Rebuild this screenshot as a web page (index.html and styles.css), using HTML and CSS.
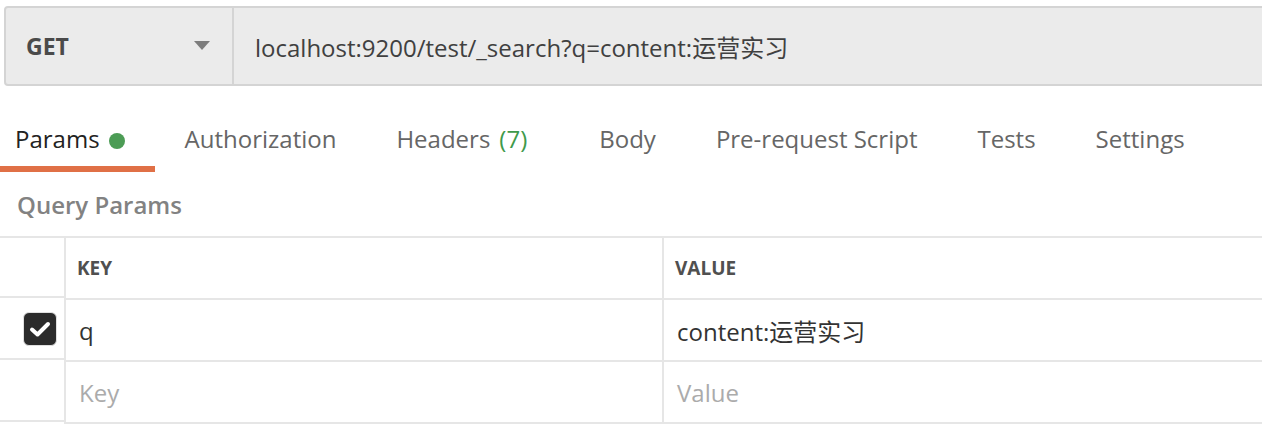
FILE: index.html
```html
<!DOCTYPE html>
<html>
<head>
<meta charset="utf-8">
<link rel="stylesheet" href="styles.css">
</head>
<body>
<div class="page">
  <div class="urlbar">
    <div class="method">
      <span class="method-name">GET</span>
      <svg class="caret" width="16" height="9" viewBox="0 0 16 9"><path d="M0 0H16L8 9Z" fill="#7d7d7d"/></svg>
    </div>
    <div class="url">localhost:9200/test/_search?q=content:运营实习</div>
  </div>

  <div class="tabs">
    <div class="tab active">Params <span class="dot"></span></div>
    <div class="tab">Authorization</div>
    <div class="tab tab-headers">Headers <span class="count">(7)</span></div>
    <div class="tab">Body</div>
    <div class="tab tab-wide">Pre-request Script</div>
    <div class="tab">Tests</div>
    <div class="tab">Settings</div>
  </div>

  <div class="section-title">Query Params</div>

  <div class="grid">
    <div class="cell c1 head"></div>
    <div class="cell c2 head"><span class="th">KEY</span></div>
    <div class="cell c3 head"><span class="th">VALUE</span></div>

    <div class="cell c1 chk-cell">
      <span class="checkbox">
        <svg width="22" height="18" viewBox="0 0 22 18"><path d="M3 9.5L8.5 14.5L19 4" fill="none" stroke="#fff" stroke-width="4" stroke-linecap="round" stroke-linejoin="round"/></svg>
      </span>
    </div>
    <div class="cell c2"><span class="val">q</span></div>
    <div class="cell c3"><span class="val">content:运营实习</span></div>

    <div class="cell c1"></div>
    <div class="cell c2"><span class="ph">Key</span></div>
    <div class="cell c3"><span class="ph">Value</span></div>
  </div>
</div>
</body>
</html>
```

FILE: styles.css
```css
html, body {
  margin: 0;
  padding: 0;
  background: #fff;
  overflow: hidden;
}
body {
  font-family: "Open Sans", "Noto Sans CJK SC", sans-serif;
  color: #333;
}
.page {
  width: 1262px;
  height: 434px;
  overflow: hidden;
}

/* URL bar */
.urlbar {
  margin: 6px 0 0 4px;
  width: 1280px;
  height: 76px;
  border: 2px solid #d4d4d4;
  border-radius: 4px;
  background: #ebebeb;
  display: flex;
  box-sizing: content-box;
}
.method {
  width: 228px;
  padding-left: 20px;
  padding-right: 22px;
  box-sizing: border-box;
  display: flex;
  align-items: center;
  justify-content: space-between;
  border-right: 2px solid #d4d4d4;
}
.method-name {
  font-weight: 700;
  font-size: 23px;
  color: #4a4a4a;
}
.caret { display: block; margin-top: -2px; }
.url {
  padding-left: 21px;
  display: flex;
  align-items: center;
  font-size: 24px;
  color: #404040;
  white-space: nowrap;
}

/* Tabs */
.tabs {
  display: flex;
  margin-top: 22px;
  height: 64px;
}
.tab {
  font-size: 24px;
  color: #666;
  padding: 14px 30px 0;
  line-height: 33px;
  box-sizing: border-box;
  height: 64px;
  border-bottom: 6px solid transparent;
  display: flex;
  align-items: flex-start;
  white-space: nowrap;
}
.tab.active {
  color: #222;
  padding-left: 15px;
  padding-right: 30px;
  border-bottom-color: #e07046;
}
.tab-headers { padding-right: 42px; }
.tab-wide { padding-left: 30px; padding-right: 30px; }
.dot {
  display: inline-block;
  width: 16px;
  height: 16px;
  border-radius: 50%;
  background: #4c9c55;
  margin-left: 9px;
  margin-top: 11px;
}
.count {
  color: #3f9a4b;
  margin-left: 9px;
}

.section-title {
  font-size: 24px;
  font-weight: 600;
  color: #828282;
  padding-left: 17px;
  margin-top: 16px;
  line-height: 33px;
}

/* Table */
.grid {
  margin-top: 15px;
  display: grid;
  grid-template-columns: 64px 598px 1fr;
  border-top: 2px solid #e6e6e6;
  width: 1280px;
}
.cell {
  height: 60px;
  border-bottom: 2px solid #e6e6e6;
  display: flex;
  align-items: center;
  box-sizing: content-box;
}
.c2, .c3 {
  border-left: 2px solid #e6e6e6;
  padding-left: 13px;
}
.c2.head, .c3.head { padding-left: 11px; }
.th {
  font-size: 19px;
  font-weight: 700;
  color: #505050;
}
.val {
  font-size: 24px;
  color: #333;
}
.ph {
  font-size: 24px;
  color: #ababab;
}
.c1 { width: 64px; box-sizing: border-box; }
.chk-cell {
  justify-content: flex-end;
  padding-right: 7px;
}
.checkbox {
  width: 34px;
  height: 34px;
  box-sizing: border-box;
  border: 1.5px solid #e0e0e0;
  border-radius: 6px;
  background: #2b2b2b;
  display: flex;
  align-items: center;
  justify-content: center;
}
.checkbox svg { display: block; }
```
